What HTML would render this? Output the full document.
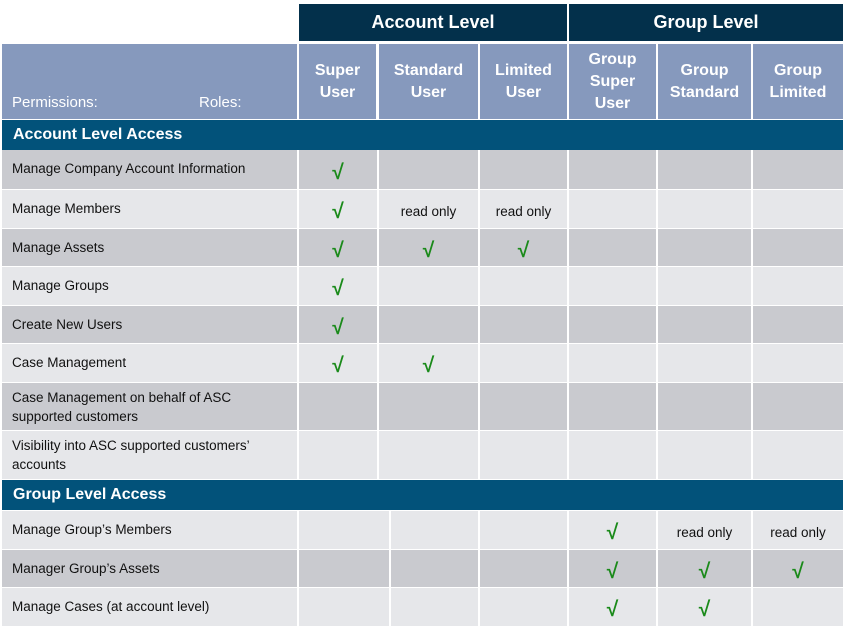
<!DOCTYPE html>
<html><head><meta charset="utf-8"><style>
body{margin:0;width:846px;height:631px;background:#fff;position:relative;overflow:hidden;font-family:"Liberation Sans",sans-serif;}
.a{position:absolute;box-sizing:border-box}
.top{background:#03304b;color:#fff;font-weight:bold;font-size:18px;display:flex;align-items:center;justify-content:center}
.hd{background:#8699bd;color:#fff;font-weight:bold;font-size:16px;display:flex;align-items:center;justify-content:center;text-align:center;line-height:22px}
.sec{background:#02527a;color:#fff;font-weight:bold;font-size:16px;padding-left:11px;display:flex;align-items:center}
.d{background:#c9cacf}.l{background:#e6e7ea}
.t{font-size:13.5px;color:#111;padding:9px 0 0 10px;line-height:19px}
.c{font-size:13.5px;color:#111;display:flex;align-items:center;justify-content:center;padding-top:4px}
.k{color:#1a8a1a;font-weight:bold;font-size:21px;padding-top:6px}
.v{position:absolute;width:2px;background:#fff}
</style></head><body>
<div class="a top" style="left:299px;top:4px;width:268px;height:37px">Account Level</div>
<div class="a top" style="left:569px;top:4px;width:274px;height:37px">Group Level</div>

<div class="a hd" style="left:2px;top:44px;width:295px;height:75px"></div>
<div class="a" style="left:12px;top:94px;color:#fff;font-size:15px">Permissions:</div>
<div class="a" style="left:199px;top:94px;color:#fff;font-size:15px">Roles:</div>
<div class="a hd" style="left:299px;top:44px;width:77px;height:75px">Super<br>User</div>
<div class="a hd" style="left:379px;top:44px;width:99px;height:75px">Standard<br>User</div>
<div class="a hd" style="left:480px;top:44px;width:87px;height:75px">Limited<br>User</div>
<div class="a hd" style="left:569px;top:44px;width:87px;height:75px">Group<br>Super<br>User</div>
<div class="a hd" style="left:658px;top:44px;width:93px;height:75px">Group<br>Standard</div>
<div class="a hd" style="left:753px;top:44px;width:90px;height:75px">Group<br>Limited</div>

<div class="a sec" style="left:2px;top:120px;width:841px;height:30px">Account Level Access</div>

<div class="a d t" style="left:2px;top:150px;width:841px;height:39px">Manage Company Account Information</div>
<div class="a l t" style="left:2px;top:190px;width:841px;height:38px">Manage Members</div>
<div class="a d t" style="left:2px;top:229px;width:841px;height:37px">Manage Assets</div>
<div class="a l t" style="left:2px;top:267px;width:841px;height:38px">Manage Groups</div>
<div class="a d t" style="left:2px;top:306px;width:841px;height:37px">Create New Users</div>
<div class="a l t" style="left:2px;top:344px;width:841px;height:38px">Case Management</div>
<div class="a d t" style="left:2px;top:383px;width:841px;height:47px;padding-top:5px">Case Management on behalf of ASC<br>supported customers</div>
<div class="a l t" style="left:2px;top:431px;width:841px;height:48px;padding-top:5px">Visibility into ASC supported customers’<br>accounts</div>

<div class="v" style="left:297px;top:150px;height:329px"></div>
<div class="v" style="left:377px;top:150px;height:329px"></div>
<div class="v" style="left:478px;top:150px;height:329px"></div>
<div class="v" style="left:567px;top:150px;height:329px"></div>
<div class="v" style="left:656px;top:150px;height:329px"></div>
<div class="v" style="left:751px;top:150px;height:329px"></div>

<div class="a c k" style="left:299px;top:150px;width:78px;height:39px">√</div>
<div class="a c k" style="left:299px;top:190px;width:78px;height:38px">√</div>
<div class="a c" style="left:379px;top:190px;width:99px;height:38px">read only</div>
<div class="a c" style="left:480px;top:190px;width:87px;height:38px">read only</div>
<div class="a c k" style="left:299px;top:229px;width:78px;height:37px">√</div>
<div class="a c k" style="left:379px;top:229px;width:99px;height:37px">√</div>
<div class="a c k" style="left:480px;top:229px;width:87px;height:37px">√</div>
<div class="a c k" style="left:299px;top:267px;width:78px;height:38px">√</div>
<div class="a c k" style="left:299px;top:306px;width:78px;height:37px">√</div>
<div class="a c k" style="left:299px;top:344px;width:78px;height:38px">√</div>
<div class="a c k" style="left:379px;top:344px;width:99px;height:38px">√</div>

<div class="a sec" style="left:2px;top:480px;width:841px;height:30px">Group Level Access</div>
<div class="a l t" style="left:2px;top:511px;width:841px;height:38px">Manage Group’s Members</div>
<div class="a d t" style="left:2px;top:550px;width:841px;height:37px">Manager Group’s Assets</div>
<div class="a l t" style="left:2px;top:588px;width:841px;height:38px">Manage Cases (at account level)</div>
<div class="v" style="left:297px;top:511px;height:115px"></div>
<div class="v" style="left:389px;top:511px;height:115px"></div>
<div class="v" style="left:478px;top:511px;height:115px"></div>
<div class="v" style="left:567px;top:511px;height:115px"></div>
<div class="v" style="left:656px;top:511px;height:115px"></div>
<div class="v" style="left:751px;top:511px;height:115px"></div>

<div class="a c k" style="left:569px;top:511px;width:87px;height:38px">√</div>
<div class="a c" style="left:658px;top:511px;width:93px;height:38px">read only</div>
<div class="a c" style="left:753px;top:511px;width:90px;height:38px">read only</div>
<div class="a c k" style="left:569px;top:550px;width:87px;height:37px">√</div>
<div class="a c k" style="left:658px;top:550px;width:93px;height:37px">√</div>
<div class="a c k" style="left:753px;top:550px;width:90px;height:37px">√</div>
<div class="a c k" style="left:569px;top:588px;width:87px;height:38px">√</div>
<div class="a c k" style="left:658px;top:588px;width:93px;height:38px">√</div>
</body></html>
